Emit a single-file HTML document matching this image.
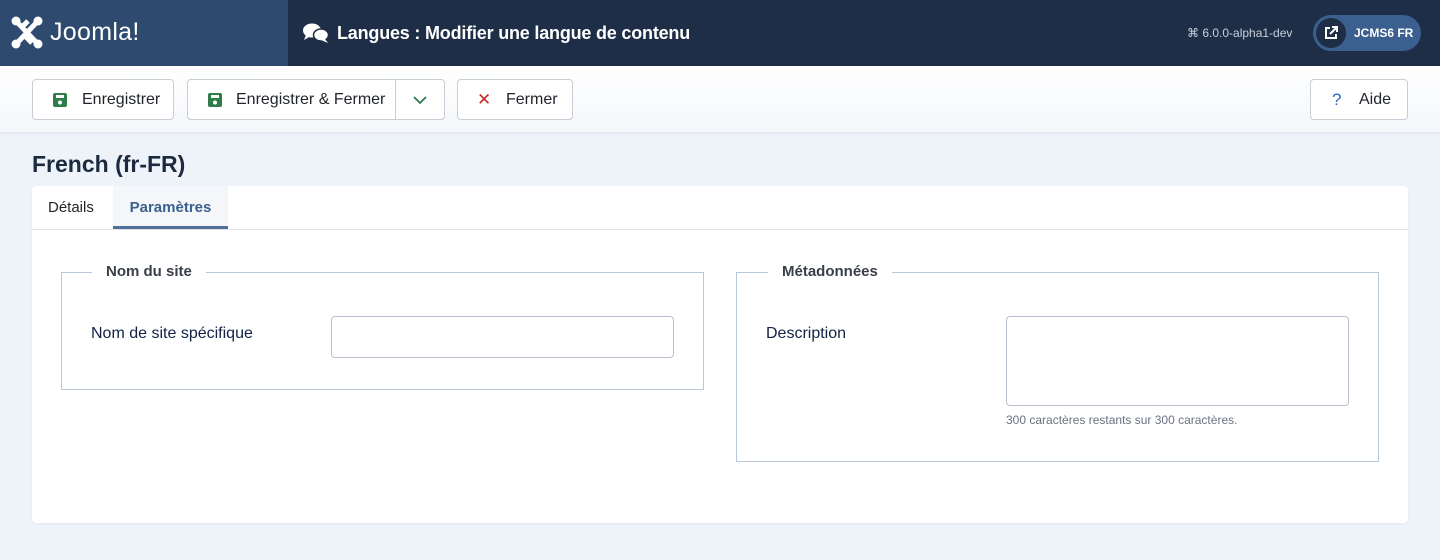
<!DOCTYPE html>
<html><head><meta charset="utf-8"><style>
*{box-sizing:border-box;margin:0;padding:0}
body{width:1440px;height:560px;overflow:hidden;background:#eef3fa;font-family:"Liberation Sans",sans-serif;color:#22262a}
.hdr{position:absolute;left:0;top:0;width:1440px;height:66px;background:#1f2e47}
.logo{position:absolute;left:0;top:0;width:288px;height:66px;background:#2e4a6f;color:#fff}
.logo span{position:absolute;left:50px;top:18px;font-size:25px;letter-spacing:0.3px;font-weight:300}
.title{position:absolute;left:337px;top:23px;color:#fff;font-size:18px;font-weight:bold;letter-spacing:-0.2px}
.ver{position:absolute;left:1187px;top:26px;color:#c8d0dc;font-size:12px}
.pill{position:absolute;left:1313px;top:15px;width:108px;height:36px;border-radius:18px;background:#3b5f8e;color:#fff;font-size:12px;font-weight:bold}
.pill .c{position:absolute;left:3px;top:3px;width:30px;height:30px;border-radius:15px;background:#1f2e47}
.pill b{position:absolute;left:41px;top:11px}
.tb{position:absolute;left:0;top:66px;width:1440px;height:66px;background:linear-gradient(#fff,#f4f7fb);box-shadow:0 2px 4px rgba(0,0,0,.05)}
.btn{position:absolute;top:13px;height:41px;border:1px solid #c9ced6;border-radius:4px;background:#fff;font-size:16px;color:#22262a;line-height:39px}
h1{position:absolute;left:32px;top:151px;font-size:23px;font-weight:bold;color:#1c2a3f}
.card{position:absolute;left:32px;top:186px;width:1376px;height:337px;background:#fff;border-radius:4px;box-shadow:0 1px 2px rgba(0,0,0,.05)}
.tabs{height:44px;border-bottom:1px solid #dfe3e8;position:relative}
.tab{position:absolute;top:0;height:43px;line-height:43px;font-size:15px}
fieldset{position:absolute;border:1px solid #b9c7dd;}
.leg{position:absolute;top:-10px;background:#fff;padding:0 14px;font-weight:bold;font-size:15px;color:#3a4048}
.lbl{position:absolute;font-size:16px;color:#112244}
.inp{position:absolute;border:1px solid #b9c2cf;border-radius:4px;background:#fff}
</style></head><body>
<div class="hdr">
<div class="logo">
<svg style="position:absolute;left:11px;top:16px" width="32" height="33" viewBox="0 0 32 33"><g fill="#fff"><circle cx="5" cy="5" r="4.5"/><circle cx="27" cy="5" r="4.5"/><circle cx="5" cy="28" r="4.5"/><circle cx="27" cy="28" r="4.5"/></g><g stroke="#fff" stroke-width="5" fill="none"><path d="M6 6 L25 26"/><path d="M26 6 L7 26"/><path d="M11 11 L17 5"/><path d="M21 27 L15 21"/></g></svg>
<span>Joomla!</span></div>
<svg style="position:absolute;left:303px;top:23px" width="26" height="20" viewBox="0 0 26 20"><ellipse cx="9" cy="7.5" rx="9" ry="7" fill="#fff"/><path d="M3 12 L1 17 L8 13Z" fill="#fff"/><ellipse cx="18" cy="12" rx="7.5" ry="6" fill="#fff" stroke="#1f2e47" stroke-width="1.5"/><path d="M22 16 L25 20 L18 17Z" fill="#fff"/></svg>
<div class="title">Langues : Modifier une langue de contenu</div>
<div class="ver">⌘ 6.0.0-alpha1-dev</div>
<div class="pill"><div class="c"><svg style="position:absolute;left:8px;top:8px" width="14" height="14" viewBox="0 0 14 14" fill="none" stroke="#fff" stroke-width="2"><path d="M6 2H2v10h10V8"/><path d="M8 1h5v5M13 1 6 8"/></svg></div><b>JCMS6 FR</b></div>
</div>
<div class="tb">
<div class="btn" style="left:32px;width:142px"><svg style="position:absolute;left:20px;top:13px" width="14" height="14" viewBox="0 0 14 14"><rect x="0" y="0" width="14" height="14" rx="2" fill="#2f7d4a"/><rect x="3" y="2" width="8" height="3" fill="#fff"/><circle cx="7" cy="9.5" r="2" fill="#fff"/></svg><span style="position:absolute;left:49px">Enregistrer</span></div>
<div class="btn" style="left:187px;width:258px"><svg style="position:absolute;left:20px;top:13px" width="14" height="14" viewBox="0 0 14 14"><rect x="0" y="0" width="14" height="14" rx="2" fill="#2f7d4a"/><rect x="3" y="2" width="8" height="3" fill="#fff"/><circle cx="7" cy="9.5" r="2" fill="#fff"/></svg><span style="position:absolute;left:48px">Enregistrer &amp; Fermer</span><div style="position:absolute;left:207px;top:0;height:39px;border-left:1px solid #c9ced6;width:50px"><svg style="position:absolute;left:17px;top:16px" width="14" height="9" viewBox="0 0 14 9" fill="none" stroke="#2f7d4a" stroke-width="1.8"><path d="M1 1l6 6 6-6"/></svg></div></div>
<div class="btn" style="left:457px;width:116px"><span style="position:absolute;left:19px;color:#c52827;font-size:17px">✕</span><span style="position:absolute;left:48px">Fermer</span></div>
<div class="btn" style="left:1310px;width:98px"><span style="position:absolute;left:21px;color:#2d6ac0;font-size:17px">?</span><span style="position:absolute;left:48px">Aide</span></div>
</div>
<h1>French (fr-FR)</h1>
<div class="card">
<div class="tabs"><div class="tab" style="left:16px">Détails</div><div class="tab" style="left:81px;width:115px;background:#f4f6f9;text-align:center;color:#3b5f8e;font-weight:bold;border-bottom:3px solid #4f6f98;height:43px;line-height:43px">Paramètres</div></div>
<fieldset style="left:29px;top:86px;width:643px;height:118px"><div class="leg" style="left:30px">Nom du site</div>
<div class="lbl" style="left:29px;top:52px">Nom de site spécifique</div>
<div class="inp" style="left:269px;top:43px;width:343px;height:42px"></div></fieldset>
<fieldset style="left:704px;top:86px;width:643px;height:190px"><div class="leg" style="left:31px">Métadonnées</div>
<div class="lbl" style="left:29px;top:52px">Description</div>
<div class="inp" style="left:269px;top:43px;width:343px;height:90px"></div>
<div style="position:absolute;left:269px;top:140px;font-size:12px;color:#6b7280">300 caractères restants sur 300 caractères.</div></fieldset>
</div>
</body></html>
